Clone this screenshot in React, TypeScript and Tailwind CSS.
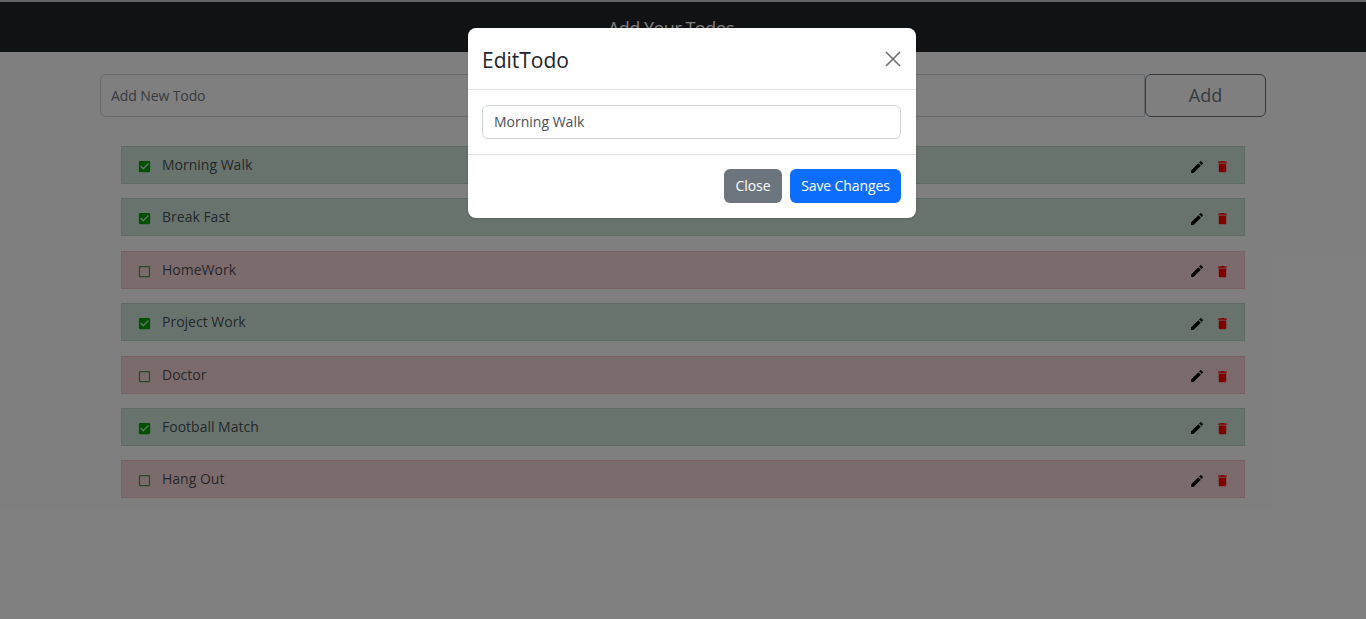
import { MdCheckBox, MdCheckBoxOutlineBlank, MdDelete, MdEdit } from 'react-icons/md';

const todos = [
  { title: 'Morning Walk', done: true },
  { title: 'Break Fast', done: true },
  { title: 'HomeWork', done: false },
  { title: 'Project Work', done: true },
  { title: 'Doctor', done: false },
  { title: 'Football Match', done: true },
  { title: 'Hang Out', done: false },
];

function TodoRow({ title, done }: { title: string; done: boolean }) {
  return (
    <div
      className={`flex h-[38px] items-center border pl-[15px] pr-[14px] ${
        done ? 'border-[#badbcc] bg-[#d1e7dd] text-[#0f5132]' : 'border-[#f5c2c7] bg-[#f8d7da] text-[#842029]'
      }`}
    >
      {done ? (
        <MdCheckBox size={15} className="mt-[3px] text-[#00a000]" />
      ) : (
        <MdCheckBoxOutlineBlank size={15} className="mt-[3px] text-[#40a040]" />
      )}
      <span className="ml-[10px] mt-[-1px] text-[14px] text-[#212529]/80">{title}</span>
      <div className="ml-auto flex items-center gap-[10px]">
        <MdEdit size={16} className="mt-[3px] text-black" />
        <MdDelete size={15} className="mt-[3px] text-[#ff0000]" />
      </div>
    </div>
  );
}

export default function App() {
  return (
    <div className="relative h-screen overflow-hidden bg-white font-['Open_Sans',sans-serif] text-[#212529]">
      <div className="h-[2px] bg-[#c8c8c8]" />
      <header className="flex h-[50px] items-center justify-center bg-[#212529] text-[18px] tracking-[-0.5px] text-white">
        <span className="ml-[-24px] mt-[2px]">Add Your Todos</span>
      </header>

      <div className="flex pl-[100px] pr-[100px] pt-[22px]">
        <input
          placeholder="Add New Todo"
          className="h-[43px] flex-1 rounded-l-[6px] border border-[#ced4da] bg-white px-[10px] text-[14px] tracking-[-0.1px] placeholder:text-[#6c757d]"
        />
        <button className="h-[43px] w-[121px] rounded-[6px] border border-[#6c757d] text-[18px] text-[#6c757d]">
          Add
        </button>
      </div>

      <div className="mt-[29px] flex flex-col gap-[14.4px] px-[121px]">
        {todos.map((t) => (
          <TodoRow key={t.title} title={t.title} done={t.done} />
        ))}
      </div>

      {/* backdrop + modal */}
      <div className="absolute inset-0 bg-black/50" />
      <div className="absolute left-[468px] top-[28px] w-[448px] rounded-[8px] bg-white shadow-sm">
        <div className="flex h-[62px] items-center justify-between border-b border-[#dee2e6] pl-[14px] pr-[15px]">
          <h5 className="mt-[3px] text-[21px] font-medium leading-none text-[#212529]">EditTodo</h5>
          <svg width="16" height="16" viewBox="0 0 16 16" className="text-[#6f6f6f]" fill="none" stroke="currentColor" strokeWidth="1.6">
            <path d="M1 1 15 15M15 1 1 15" />
          </svg>
        </div>
        <div className="flex h-[65px] items-center border-b border-[#dee2e6] pl-[14px] pr-[15px]">
          <input
            readOnly
            value="Morning Walk"
            className="h-[34px] w-full rounded-[6px] border border-[#ced4da] px-[11px] pb-[2px] text-[14px] text-[#495057]"
          />
        </div>
        <div className="flex h-[63px] items-start justify-end gap-[8px] pr-[15px] pt-[14px]">
          <button className="h-[34px] w-[58px] rounded-[6px] bg-[#6c757d] pb-[2px] text-[14px] tracking-[-0.1px] text-white">Close</button>
          <button className="h-[34px] w-[111px] rounded-[6px] bg-[#0d6efd] pb-[2px] text-[14px] tracking-[-0.1px] text-white">Save Changes</button>
        </div>
      </div>
    </div>
  );
}
